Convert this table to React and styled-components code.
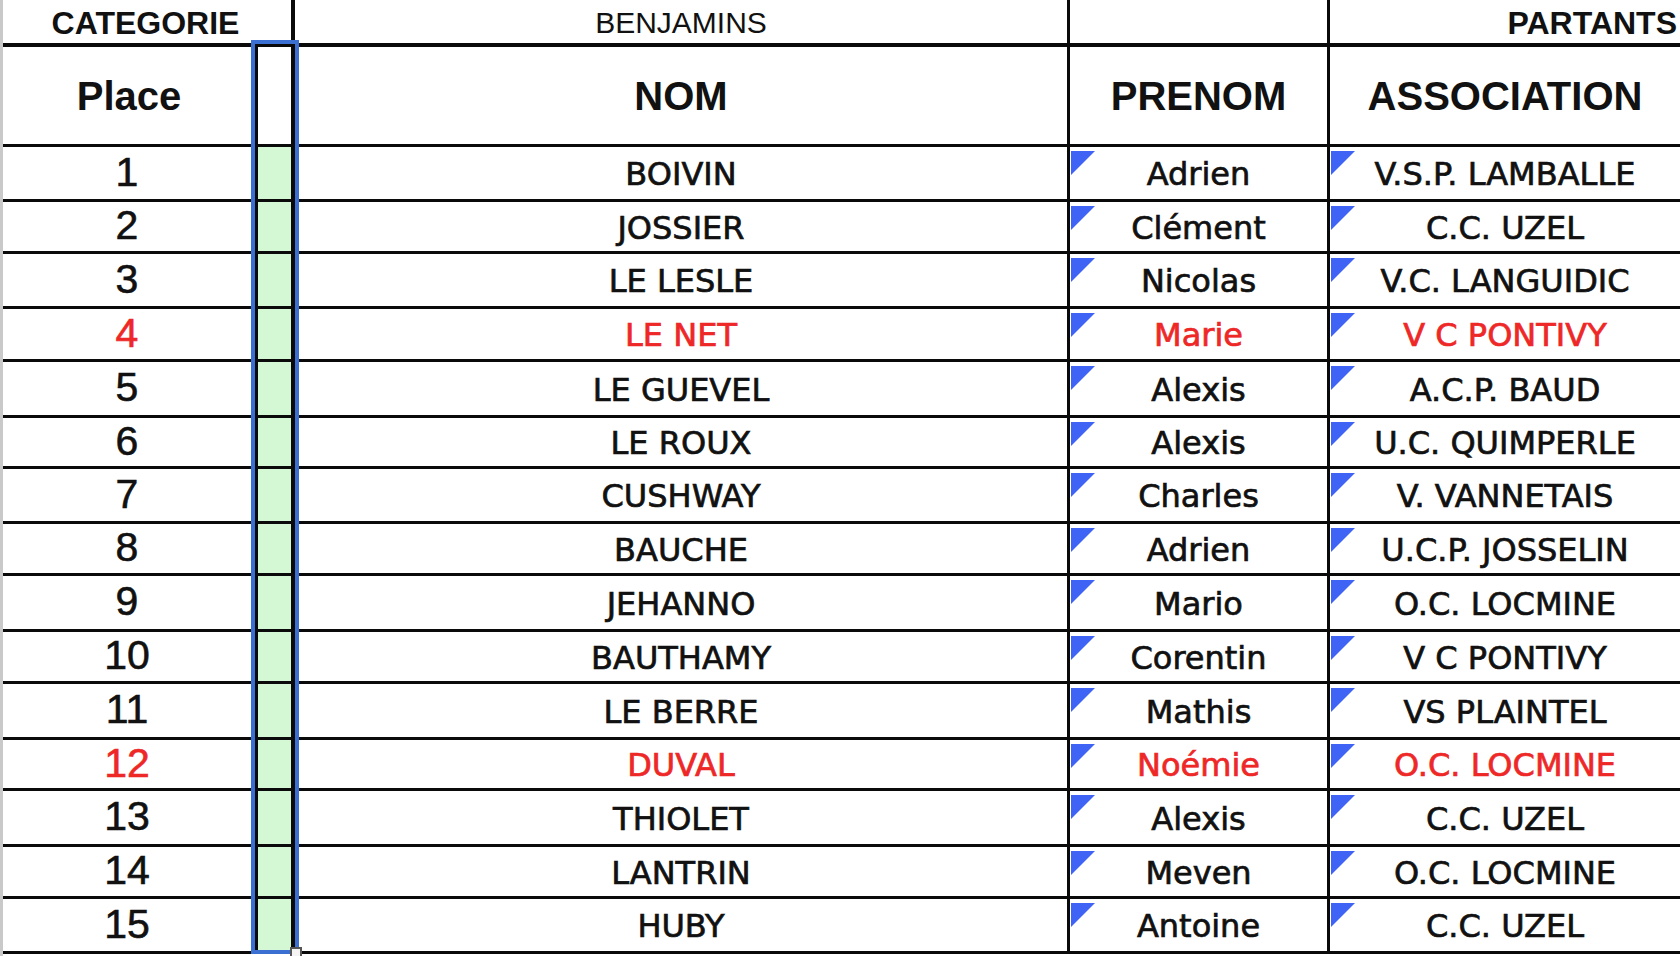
import React from "react"
import styled, { createGlobalStyle } from "styled-components"

const GlobalStyle = createGlobalStyle`
  html, body {
    margin: 0;
    padding: 0;
    background: #fff;
    overflow: hidden;
  }
`

const RED = "#ee2727"
const LINE = "#0a0a0a"

// results of the race, red rows are the girls
const riders = [
  { place: 1, nom: "BOIVIN", prenom: "Adrien", asso: "V.S.P. LAMBALLE", h: 55 },
  { place: 2, nom: "JOSSIER", prenom: "Clément", asso: "C.C. UZEL", h: 52 },
  { place: 3, nom: "LE LESLE", prenom: "Nicolas", asso: "V.C. LANGUIDIC", h: 55 },
  { place: 4, nom: "LE NET", prenom: "Marie", asso: "V C PONTIVY", h: 53, red: true },
  { place: 5, nom: "LE GUEVEL", prenom: "Alexis", asso: "A.C.P. BAUD", h: 56 },
  { place: 6, nom: "LE ROUX", prenom: "Alexis", asso: "U.C. QUIMPERLE", h: 51 },
  { place: 7, nom: "CUSHWAY", prenom: "Charles", asso: "V. VANNETAIS", h: 55 },
  { place: 8, nom: "BAUCHE", prenom: "Adrien", asso: "U.C.P. JOSSELIN", h: 52 },
  { place: 9, nom: "JEHANNO", prenom: "Mario", asso: "O.C. LOCMINE", h: 56 },
  { place: 10, nom: "BAUTHAMY", prenom: "Corentin", asso: "V C PONTIVY", h: 52 },
  { place: 11, nom: "LE BERRE", prenom: "Mathis", asso: "VS PLAINTEL", h: 56 },
  { place: 12, nom: "DUVAL", prenom: "Noémie", asso: "O.C. LOCMINE", h: 51, red: true },
  { place: 13, nom: "THIOLET", prenom: "Alexis", asso: "C.C. UZEL", h: 56 },
  { place: 14, nom: "LANTRIN", prenom: "Meven", asso: "O.C. LOCMINE", h: 52 },
  { place: 15, nom: "HUBY", prenom: "Antoine", asso: "C.C. UZEL", h: 55 },
]

export default function App() {
  return (
    <>
      <GlobalStyle />
      <Sheet>
        <Row $h={47} $line={4}>
          <Cell $span={2} $rb={4}>
            <TopTitle $bold>CATEGORIE</TopTitle>
          </Cell>
          <Cell $rb={3}>
            <TopTitle>BENJAMINS</TopTitle>
          </Cell>
          <Cell $rb={3} />
          <Cell $align="flex-end">
            <TopTitle $bold>PARTANTS</TopTitle>
          </Cell>
        </Row>

        <Row $h={100}>
          <Cell $rb={3}>
            <HeadText>Place</HeadText>
          </Cell>
          <Cell $rb={4} />
          <Cell $rb={3}>
            <HeadText>NOM</HeadText>
          </Cell>
          <Cell $rb={3}>
            <HeadText>PRENOM</HeadText>
          </Cell>
          <Cell>
            <HeadText>ASSOCIATION</HeadText>
          </Cell>
        </Row>

        {riders.map((r) => (
          <Row key={r.place} $h={r.h}>
            <Cell $rb={3}>
              <Num $red={r.red}>{r.place}</Num>
            </Cell>
            <Cell $rb={4} $green />
            <Cell $rb={3}>
              <Value $red={r.red}>{r.nom}</Value>
            </Cell>
            <Cell $rb={3}>
              <Marker />
              <Value $red={r.red}>{r.prenom}</Value>
            </Cell>
            <Cell>
              <Marker />
              <Value $red={r.red}>{r.asso}</Value>
            </Cell>
          </Row>
        ))}

        <Selection />
        <FillHandle />
      </Sheet>
    </>
  )
}

const Sheet = styled.div`
  position: relative;
  width: 1680px;
  height: 956px;
  overflow: hidden;
  background: #fff;
  border-left: 3px solid #c9c9c9;
  box-sizing: border-box;
`

const Row = styled.div`
  display: grid;
  grid-template-columns: 255px 37px 775px 260px 1fr;
  height: ${(p) => p.$h}px;
  box-sizing: border-box;
  border-bottom: ${(p) => p.$line || 3}px solid ${LINE};
`

const Cell = styled.div`
  position: relative;
  display: flex;
  align-items: center;
  justify-content: ${(p) => p.$align || "center"};
  grid-column: span ${(p) => p.$span || 1};
  box-sizing: border-box;
  border-right: ${(p) => (p.$rb ? `${p.$rb}px solid ${LINE}` : "none")};
  background: ${(p) => (p.$green ? "#d5f8d4" : "transparent")};
  min-width: 0;
`

const TopTitle = styled.span`
  font-family: "Liberation Sans", Arial, sans-serif;
  font-size: ${(p) => (p.$bold ? 32 : 30)}px;
  font-weight: ${(p) => (p.$bold ? 700 : 400)};
  color: #111;
  padding-top: 3px;
  padding-right: ${(p) => (p.$bold ? 3 : 0)}px;
  white-space: nowrap;
`

const HeadText = styled.span`
  font-family: "Liberation Sans", Arial, sans-serif;
  font-size: 40px;
  font-weight: 700;
  color: #111;
  white-space: nowrap;
  margin-top: 2px;
`

const Num = styled.span`
  font-family: "Liberation Sans", Arial, sans-serif;
  font-size: 41px;
  color: ${(p) => (p.$red ? RED : "#111")};
  -webkit-text-stroke: 0.6px ${(p) => (p.$red ? RED : "#111")};
  margin-top: -2px;
  margin-left: -4px;
`

const Value = styled.span`
  font-family: "DejaVu Sans", Verdana, sans-serif;
  font-size: 32px;
  color: ${(p) => (p.$red ? RED : "#111")};
  -webkit-text-stroke: 0.7px ${(p) => (p.$red ? RED : "#111")};
  white-space: nowrap;
  margin-top: 2px;
`

const Marker = styled.span`
  position: absolute;
  top: 4px;
  left: 1px;
  width: 24px;
  height: 24px;
  background: #3f63f4;
  clip-path: polygon(0 0, 100% 0, 0 100%);
`

const Selection = styled.div`
  position: absolute;
  left: 248px;
  top: 40px;
  width: 48px;
  height: 914px;
  box-sizing: border-box;
  border: 4px solid #3b6fd2;
  pointer-events: none;
`

const FillHandle = styled.div`
  position: absolute;
  left: 287px;
  top: 947px;
  width: 12px;
  height: 12px;
  box-sizing: border-box;
  background: #f4f4f4;
  border: 2px solid #555;
`
